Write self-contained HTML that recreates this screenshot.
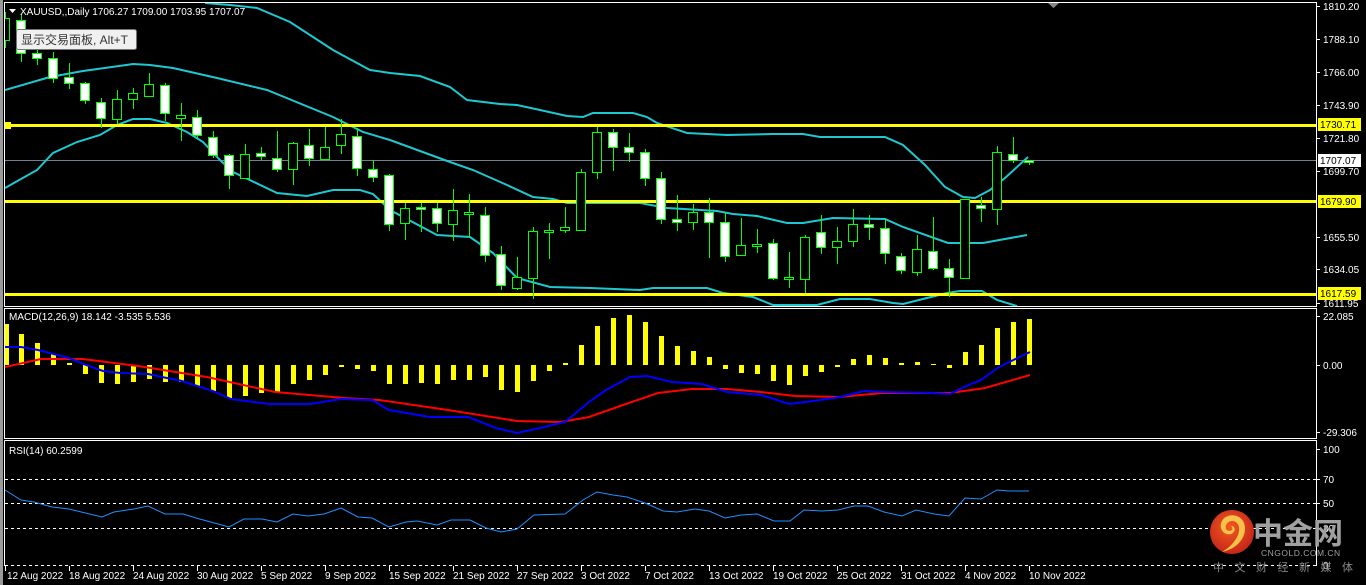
<!DOCTYPE html>
<html><head><meta charset="utf-8"><style>
html,body{margin:0;padding:0;background:#000;width:1366px;height:585px;overflow:hidden}
svg{display:block}
text{font-family:"Liberation Sans","Noto Sans CJK SC",sans-serif}
</style></head><body>
<svg width="1366" height="585" viewBox="0 0 1366 585" xmlns="http://www.w3.org/2000/svg">
<rect x="0" y="0" width="1366" height="585" fill="#000"/>
<rect x="0" y="0" width="3" height="585" fill="#9a9a9a"/>
<defs>
<clipPath id="c1"><rect x="5" y="3" width="1311" height="303"/></clipPath>
<clipPath id="c2"><rect x="5" y="309" width="1311" height="129"/></clipPath>
<radialGradient id="lg" cx="0.45" cy="0.4" r="0.6"><stop offset="0" stop-color="#f05a1e"/><stop offset="1" stop-color="#c8261a"/></radialGradient>
</defs>
<!-- frames -->
<g fill="none" stroke="#fff" stroke-width="1" shape-rendering="crispEdges">
<rect x="4.5" y="2.5" width="1312" height="304"/>
<rect x="4.5" y="308.5" width="1312" height="130"/>
<path d="M4.5 440.5H1316.5V566M4.5 440.5V566"/>
</g>
<!-- right axis ticks -->
<g stroke="#fff" shape-rendering="crispEdges">
<path d="M1316 6.5h4M1316 39.5h4M1316 72.5h4M1316 105.5h4M1316 138.5h4M1316 171.5h4M1316 237.5h4M1316 269.5h4M1316 303.5h4M1316 316.5h4M1316 365.5h4M1316 432.5h4M1316 449.5h4M1316 479.5h4M1316 503.5h4M1316 528.5h4"/>
<path d="M5.5 566v5M69.5 566v5M133.5 566v5M197.5 566v5M261.5 566v5M325.5 566v5M389.5 566v5M453.5 566v5M517.5 566v5M581.5 566v5M645.5 566v5M709.5 566v5M773.5 566v5M837.5 566v5M901.5 566v5M965.5 566v5M1029.5 566v5"/>
</g>
<g clip-path="url(#c1)">
<!-- grey current price line -->
<path d="M5 160.5H1316" stroke="#708090" stroke-width="1"/>
<!-- bollinger -->
<g fill="none" stroke="#1ec8d0" stroke-width="2">
<path d="M205 3 L230 5 L257 8 L290 22 L333 50 L370 70 L390 73 L420 76 L450 87 L467 100 L500 104 L517 105 L540 110 L567 116 L583 117 L593 113 L633 113 L647 117 L657 123 L687 133 L727 135 L773 134 L803 134 L820 137 L885 137 L903 145 L925 165 L945 187 L963 197 L975 198 L990 190 L1005 178 L1028 157"/>
<path d="M5 90 L50 77 L83 71 L133 64 L150 65 L173 68 L217 78 L267 90 L333 117 L363 132 L390 140 L450 162 L473 170 L507 185 L533 197 L553 199 L567 203 L640 203 L667 208 L717 211 L733 214 L757 216 L787 223 L803 223 L833 218 L885 219 L903 227 L948 243 L983 243 L1027 235"/>
<path d="M5 188 L37 170 L53 153 L77 142 L100 135 L117 125 L133 119 L150 119 L167 123 L187 132 L203 142 L220 160 L233 172 L277 193 L307 196 L333 190 L360 190 L373 194 L390 210 L437 235 L470 237 L493 253 L517 278 L550 287 L590 288 L640 290 L653 288 L707 288 L723 293 L753 297 L773 305 L817 305 L840 299 L870 299 L893 303 L903 304 L947 293 L960 291 L982 291 L997 300 L1017 306"/>
</g>
<!-- yellow levels -->
<g fill="#ff0" shape-rendering="crispEdges">
<rect x="5" y="124" width="1311" height="3"/>
<rect x="5" y="200" width="1311" height="3"/>
<rect x="5" y="293" width="1311" height="3"/>
<rect x="4" y="122" width="7" height="7"/>
</g>
<!-- candles -->
<g stroke="#00ff00" stroke-width="1" shape-rendering="crispEdges">
<path d="M5.5 12V48M21.5 14V62M37.5 50V65M53.5 52V83M69.5 63V89M85.5 82V104M101.5 98V128M117.5 90V124M133.5 88V109M149.5 73V97M165.5 83V121M181.5 103V141M197.5 110V138M213.5 131V158M229.5 154V189M245.5 144V179M261.5 147V160M277.5 131V172M293.5 142V185M309.5 129V166M325.5 127V160M341.5 119V154M357.5 128V176M373.5 160V182M389.5 174V231M405.5 203V240M421.5 203V232M437.5 203V232M453.5 189V241M469.5 194V237M485.5 207V262M501.5 246V290M517.5 257V290M533.5 227V299M549.5 223V259M565.5 207V233M581.5 169V231M597.5 127V179M613.5 129V171M629.5 133V162M645.5 149V186M661.5 172V224M677.5 195V231M693.5 204V230M709.5 198V258M725.5 213V262M741.5 218V256M757.5 229V253M773.5 239V280M789.5 252V288M805.5 235V293M821.5 215V254M837.5 227V264M853.5 209V247M869.5 215V240M885.5 220V264M901.5 253V274M917.5 235V276M933.5 217V270M949.5 259V297M965.5 199V278M981.5 197V222M997.5 146V225M1013.5 137V163M1029.5 160V165"/>
<g fill="#000">
<rect x="0.5" y="18.5" width="9" height="22"/><rect x="112.5" y="99.5" width="9" height="20"/><rect x="128.5" y="93.5" width="9" height="6"/><rect x="144.5" y="84.5" width="9" height="12"/><rect x="176.5" y="115.5" width="9" height="3"/><rect x="240.5" y="154.5" width="9" height="24"/><rect x="288.5" y="143.5" width="9" height="26"/><rect x="320.5" y="147.5" width="9" height="12"/><rect x="336.5" y="134.5" width="9" height="11"/><rect x="400.5" y="208.5" width="9" height="15"/><rect x="448.5" y="210.5" width="9" height="14"/><rect x="464.5" y="212.5" width="9" height="2"/><rect x="512.5" y="277.5" width="9" height="11"/><rect x="528.5" y="231.5" width="9" height="47"/><rect x="544.5" y="230.5" width="9" height="2"/><rect x="560.5" y="227.5" width="9" height="3"/><rect x="576.5" y="172.5" width="9" height="58"/><rect x="592.5" y="132.5" width="9" height="40"/><rect x="688.5" y="212.5" width="9" height="10"/><rect x="736.5" y="245.5" width="9" height="10"/><rect x="752.5" y="244.5" width="9" height="2"/><rect x="784.5" y="277.5" width="9" height="2"/><rect x="800.5" y="237.5" width="9" height="42"/><rect x="832.5" y="241.5" width="9" height="6"/><rect x="848.5" y="224.5" width="9" height="17"/><rect x="912.5" y="249.5" width="9" height="23"/><rect x="960.5" y="199.5" width="9" height="79"/><rect x="992.5" y="152.5" width="9" height="57"/>
</g>
<g fill="#fff">
<rect x="16.5" y="20.5" width="9" height="33"/><rect x="32.5" y="53.5" width="9" height="5"/><rect x="48.5" y="58.5" width="9" height="20"/><rect x="64.5" y="77.5" width="9" height="6"/><rect x="80.5" y="83.5" width="9" height="17"/><rect x="96.5" y="102.5" width="9" height="16"/><rect x="160.5" y="85.5" width="9" height="28"/><rect x="192.5" y="117.5" width="9" height="18"/><rect x="208.5" y="137.5" width="9" height="18"/><rect x="224.5" y="155.5" width="9" height="20"/><rect x="256.5" y="153.5" width="9" height="3"/><rect x="272.5" y="158.5" width="9" height="11"/><rect x="304.5" y="145.5" width="9" height="13"/><rect x="352.5" y="136.5" width="9" height="32"/><rect x="368.5" y="169.5" width="9" height="8"/><rect x="384.5" y="175.5" width="9" height="49"/><rect x="416.5" y="207.5" width="9" height="2"/><rect x="432.5" y="208.5" width="9" height="15"/><rect x="480.5" y="215.5" width="9" height="40"/><rect x="496.5" y="254.5" width="9" height="31"/><rect x="608.5" y="132.5" width="9" height="15"/><rect x="624.5" y="147.5" width="9" height="5"/><rect x="640.5" y="152.5" width="9" height="26"/><rect x="656.5" y="178.5" width="9" height="41"/><rect x="672.5" y="219.5" width="9" height="3"/><rect x="704.5" y="212.5" width="9" height="10"/><rect x="720.5" y="222.5" width="9" height="34"/><rect x="768.5" y="243.5" width="9" height="35"/><rect x="816.5" y="232.5" width="9" height="15"/><rect x="864.5" y="224.5" width="9" height="3"/><rect x="880.5" y="228.5" width="9" height="25"/><rect x="896.5" y="256.5" width="9" height="14"/><rect x="928.5" y="251.5" width="9" height="17"/><rect x="944.5" y="268.5" width="9" height="9"/><rect x="976.5" y="205.5" width="9" height="3"/><rect x="1008.5" y="154.5" width="9" height="6"/><rect x="1024.5" y="160.5" width="9" height="2"/>
</g>
</g>
</g>
<!-- top small triangle -->
<path d="M1048 3h11l-5.5 5z" fill="#888"/>
<!-- MACD -->
<g clip-path="url(#c2)">
<g fill="#ff0" shape-rendering="crispEdges">
<rect x="4" y="324" width="5" height="41"/><rect x="19" y="334" width="5" height="31"/><rect x="35" y="343" width="5" height="22"/><rect x="51" y="354" width="5" height="11"/><rect x="67" y="363" width="5" height="2"/>
<rect x="83" y="365" width="5" height="9"/><rect x="99" y="365" width="5" height="18"/><rect x="115" y="365" width="5" height="19"/><rect x="131" y="365" width="5" height="17"/><rect x="147" y="365" width="5" height="14"/><rect x="163" y="365" width="5" height="17"/><rect x="179" y="365" width="5" height="17"/><rect x="195" y="365" width="5" height="21"/><rect x="211" y="365" width="5" height="26"/><rect x="227" y="365" width="5" height="33"/><rect x="243" y="365" width="5" height="31"/><rect x="259" y="365" width="5" height="28"/><rect x="275" y="365" width="5" height="28"/><rect x="291" y="365" width="5" height="19"/><rect x="307" y="365" width="5" height="15"/><rect x="323" y="365" width="5" height="10"/><rect x="339" y="365" width="5" height="2"/><rect x="355" y="365" width="5" height="4"/><rect x="371" y="365" width="5" height="6"/><rect x="387" y="365" width="5" height="19"/><rect x="403" y="365" width="5" height="19"/><rect x="419" y="365" width="5" height="18"/><rect x="435" y="365" width="5" height="19"/><rect x="451" y="365" width="5" height="15"/><rect x="467" y="365" width="5" height="15"/><rect x="483" y="365" width="5" height="12"/><rect x="499" y="365" width="5" height="25"/><rect x="515" y="365" width="5" height="27"/><rect x="531" y="365" width="5" height="16"/><rect x="547" y="365" width="5" height="6"/>
<rect x="563" y="363" width="5" height="2"/><rect x="579" y="345" width="5" height="20"/><rect x="595" y="326" width="5" height="39"/><rect x="611" y="318" width="5" height="47"/><rect x="627" y="315" width="5" height="50"/><rect x="643" y="322" width="5" height="43"/><rect x="659" y="336" width="5" height="29"/><rect x="675" y="346" width="5" height="19"/><rect x="691" y="351" width="5" height="14"/><rect x="707" y="357" width="5" height="8"/>
<rect x="723" y="365" width="5" height="4"/><rect x="739" y="365" width="5" height="8"/><rect x="755" y="365" width="5" height="9"/><rect x="771" y="365" width="5" height="16"/><rect x="787" y="365" width="5" height="20"/><rect x="803" y="365" width="5" height="11"/><rect x="819" y="365" width="5" height="7"/><rect x="835" y="365" width="5" height="2"/>
<rect x="851" y="359" width="5" height="6"/><rect x="867" y="355" width="5" height="10"/><rect x="883" y="358" width="5" height="7"/><rect x="899" y="363" width="5" height="2"/><rect x="915" y="362" width="5" height="3"/><rect x="931" y="364" width="5" height="1"/><rect x="947" y="365" width="5" height="3"/><rect x="963" y="352" width="5" height="13"/><rect x="979" y="345" width="5" height="20"/><rect x="995" y="328" width="5" height="37"/><rect x="1011" y="322" width="5" height="43"/><rect x="1027" y="319" width="5" height="46"/>
</g>
<path fill="none" stroke="#ff0000" stroke-width="2" d="M5 367 L41 359 L83 359 L138 366 L207 377 L275 392 L344 398 L379 400 L448 410 L517 421 L561 422 L589 417 L623 405 L658 393 L692 389 L727 389 L761 392 L795 396 L840 397 L882 393 L950 393 L985 388 L1030 375"/>
<path fill="none" stroke="#0000ff" stroke-width="2" d="M5 347 L21 347 L38 350 L69 358 L86 365 L103 371 L120 373 L148 374 L162 377 L182 381 L213 391 L231 399 L269 404 L310 404 L341 399 L372 400 L389 410 L430 417 L468 417 L496 428 L517 433 L540 428 L565 422 L589 402 L606 390 L630 377 L647 376 L672 382 L702 384 L727 392 L761 395 L789 404 L813 401 L840 397 L864 391 L885 392 L933 393 L950 394 L964 387 L981 380 L999 367 L1030 352"/>
</g>
<!-- RSI -->
<g stroke="#fff" stroke-width="1" stroke-dasharray="3,3" shape-rendering="crispEdges">
<path d="M5 479.5H1316M5 503.5H1316M5 528.5H1316M5 565.5H1316"/>
</g>
<path fill="none" stroke="#1e90ff" stroke-width="1" d="M5 490 L21 500 L34 502 L52 507 L69 509 L102 517 L114 512 L134 509 L148 506 L165 514 L183 514 L196 518 L229 527 L244 519 L262 519 L277 522 L293 514 L308 516 L324 514 L341 508 L358 517 L372 518 L389 527 L406 522 L417 521 L437 525 L451 520 L470 520 L486 528 L501 532 L517 529 L534 515 L565 514 L583 500 L597 492 L613 495 L627 497 L645 503 L663 511 L677 512 L695 509 L709 511 L725 518 L741 515 L757 514 L774 521 L790 521 L804 510 L822 511 L838 510 L854 506 L868 506 L884 512 L902 516 L916 510 L934 514 L949 516 L965 498 L981 499 L997 490 L1009 491 L1029 491"/>
<!-- texts -->
<g fill="#fff" font-size="10">
<path d="M9 9h7l-3.5 4z" fill="#fff"/>
<text x="20" y="15">XAUUSD,,Daily  1706.27 1709.00 1703.95 1707.07</text>
<text x="9" y="320">MACD(12,26,9) 18.142 -3.535 5.536</text>
<text x="9" y="454">RSI(14) 60.2599</text>
<g font-size="10">
<text x="1323" y="10">1810.20</text><text x="1323" y="43">1788.10</text><text x="1323" y="76">1766.00</text><text x="1323" y="109">1743.90</text><text x="1323" y="142">1721.80</text><text x="1323" y="175">1699.70</text><text x="1323" y="241">1655.50</text><text x="1323" y="273">1634.05</text><text x="1323" y="307">1611.95</text>
<text x="1323" y="320">22.085</text><text x="1323" y="369">0.00</text><text x="1323" y="436">-29.306</text>
<text x="1323" y="453">100</text><text x="1323" y="483">70</text><text x="1323" y="507">50</text><text x="1323" y="532">30</text><text x="1323" y="569">0</text>
</g>
</g>
<g font-size="10">
<rect x="1318" y="118" width="43" height="13" fill="#ff0"/><text x="1320" y="128" fill="#000">1730.71</text>
<rect x="1318" y="154" width="43" height="13" fill="#fff"/><text x="1320" y="164" fill="#000">1707.07</text>
<rect x="1318" y="195" width="43" height="13" fill="#ff0"/><text x="1320" y="205" fill="#000">1679.90</text>
<rect x="1318" y="287" width="43" height="13" fill="#ff0"/><text x="1320" y="297" fill="#000">1617.59</text>
</g>
<g fill="#fff" font-size="10">
<text x="7" y="579">12 Aug 2022</text><text x="69" y="579">18 Aug 2022</text><text x="133" y="579">24 Aug 2022</text><text x="197" y="579">30 Aug 2022</text><text x="261" y="579">5 Sep 2022</text><text x="325" y="579">9 Sep 2022</text><text x="389" y="579">15 Sep 2022</text><text x="453" y="579">21 Sep 2022</text><text x="517" y="579">27 Sep 2022</text><text x="581" y="579">3 Oct 2022</text><text x="645" y="579">7 Oct 2022</text><text x="709" y="579">13 Oct 2022</text><text x="773" y="579">19 Oct 2022</text><text x="837" y="579">25 Oct 2022</text><text x="901" y="579">31 Oct 2022</text><text x="965" y="579">4 Nov 2022</text><text x="1029" y="579">10 Nov 2022</text>
</g>
<!-- tooltip -->
<rect x="16.5" y="29.5" width="120" height="20" rx="2" fill="#f0f0f0" stroke="#767676"/>
<text x="21" y="44" font-size="12" fill="#333">显示交易面板, Alt+T</text>
<!-- logo -->
<circle cx="1232" cy="532" r="22" fill="url(#lg)"/>
<path d="M1222 552 C1240 548 1248 534 1244 523 C1240 513 1226 513 1222 521 C1218 528 1224 536 1231 534 C1236 532 1236 526 1231 526 C1235 530 1229 533 1226 529 C1224 523 1232 518 1237 523 C1243 530 1236 544 1222 552Z" fill="#f7c24a"/>
<text x="1253" y="544" font-size="30" font-weight="bold" fill="#a0a0a0" font-family="'Noto Sans CJK SC',sans-serif">中金网</text>
<text x="1261" y="556" font-size="8.5" fill="#a0a0a0" letter-spacing="0.5">CNGOLD.COM.CN</text>
<text x="1213" y="571" font-size="11" fill="#8a8a8a" letter-spacing="10.5">中文财经新媒体</text>
</svg>
</body></html>
